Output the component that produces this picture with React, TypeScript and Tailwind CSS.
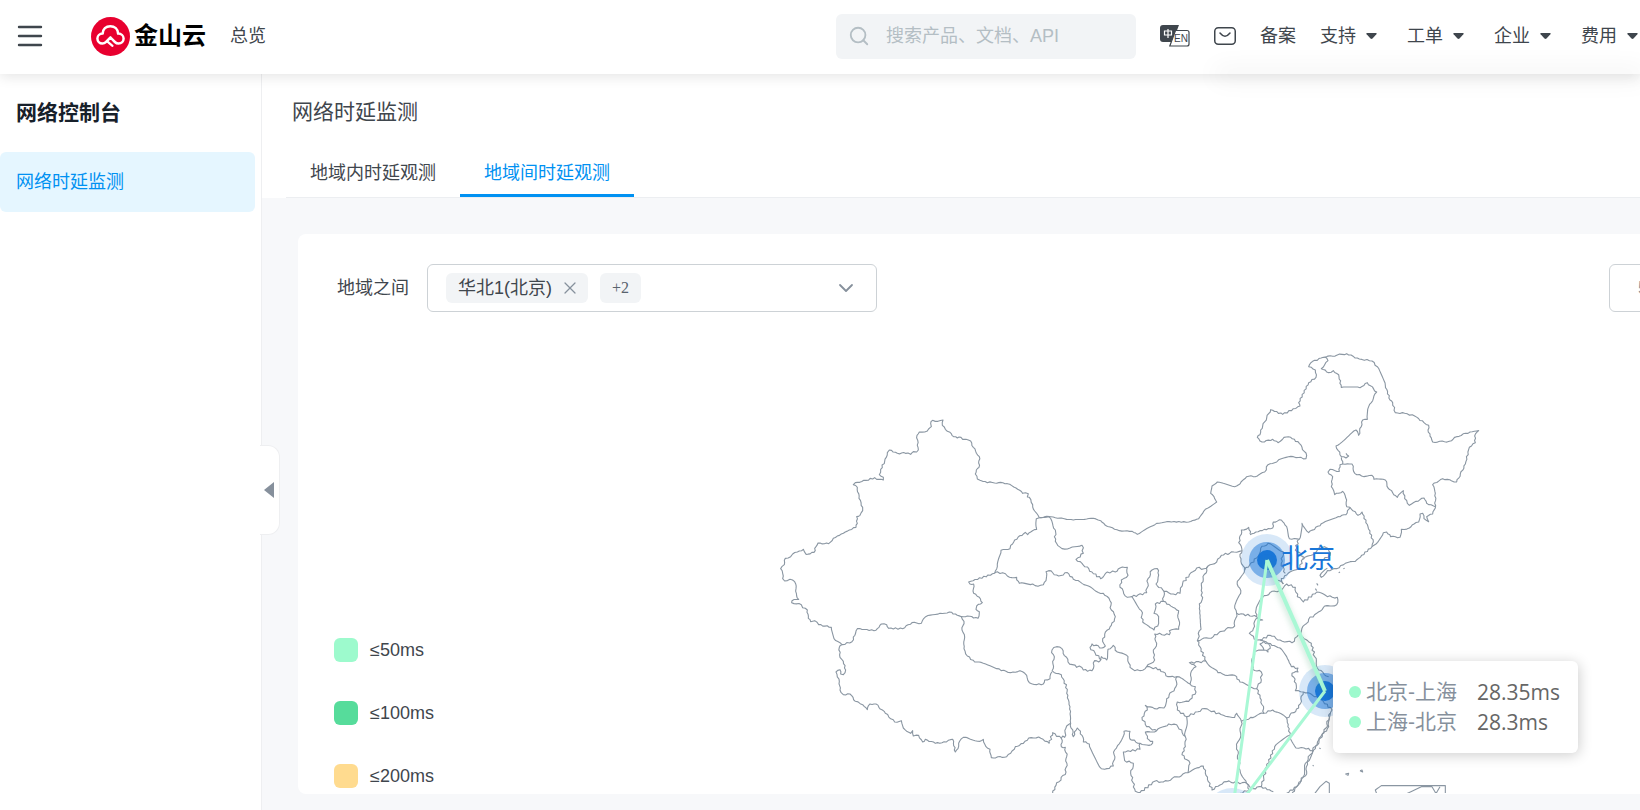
import { useState } from "react";
import type { ReactNode } from "react";
import { ChevronDown, Search, X } from "lucide-react";

const NAV_MENUS = ["支持", "工单", "企业", "费用"];

const TABS = [
  { id: "inner", label: "地域内时延观测" },
  { id: "between", label: "地域间时延观测" },
];

const LEGEND = [
  { label: "≤50ms", color: "bg-[#9dfacd]" },
  { label: "≤100ms", color: "bg-[#56dc9b]" },
  { label: "≤200ms", color: "bg-[#ffdb8f]" },
];

const DELAYS = [
  { route: "北京-上海", value: "28.35ms" },
  { route: "上海-北京", value: "28.3ms" },
];

const CITIES = [
  { name: "北京", x: 1267, y: 560, labelled: true },
  { name: "上海", x: 1325, y: 691, labelled: false },
  { name: "广州", x: 1232, y: 814, labelled: false },
];

// Province borders. Each sheet has its own origin and is drawn at three units per pixel.
const SHEETS = [
  {
    id: "west",
    origin: [760, 400],
    wobble: 2,
    lines: [
      "868,350 838,353 824,333 818,314 808,292 802,291 805,281 788,280 768,264 742,251 722,247 704,249 668,244 652,237 646,222 649,210 657,202 658,170 640,142 632,123 618,118 608,118 603,112 592,114 576,106 570,97 556,88 547,76 549,60 534,64 518,61 512,70 514,80 502,93 478,96 471,106 475,150 470,156 460,155 452,163 444,159 412,160 388,150 382,158 374,184 362,208 358,224 370,232 370,240 350,238 344,233 318,241 286,248 280,254 292,262 297,295 308,322 308,332 300,346 290,350 292,370 288,382 268,390 220,415 206,431 174,429 168,440 162,457 138,463 130,448 112,456 98,462 92,470 76,475 73,494 62,506 68,520 68,536 74,543 90,538 104,545 108,566 110,588 116,598 96,602 95,608 124,614 128,623 142,630 145,655 152,665 164,662 176,674 214,682 222,716 240,728 246,734",
      "246,734 276,725 292,686 342,692 352,686 364,672 380,674 386,685 428,686 456,668 484,670 497,650 540,640 568,636 604,650 622,648 654,655 658,635 648,628 650,618 667,608 658,592 641,580 641,552 630,552 626,546 704,520 712,500 723,451 750,446 752,436 764,420 796,397 803,404 812,396 830,388 829,356 838,353",
      "246,734 238,742 240,772 250,784 257,810 250,824 242,822 240,809 228,816 238,845 240,870 250,884 270,882 286,904 308,914 322,929 330,912 348,912 376,940 404,966 424,962 430,984 452,1000 458,992 460,1008 476,1006 488,1026 496,1018 526,1030 546,1028 578,1018 586,1056 594,1046 596,1030 610,1012 660,1024 670,1018 678,1040 690,1048 694,1073 740,1070 752,1060 766,1040 790,1030 806,1014 836,1011 868,1030",
      "604,650 612,664 606,690 614,712 612,746 622,768 644,786 670,790 710,806 752,818 780,812 800,826 808,848 830,854 850,852 854,840 870,836 876,815",
    ],
  },
  {
    id: "plateau",
    origin: [900, 560],
    wobble: 3,
    lines: [
      "448,550 458,518 484,535 488,528 494,532 500,498 512,490",
      "456,332 484,344 502,388 500,400 510,440 512,490 520,530 532,504 546,526 550,546 568,552 604,626 614,628 640,618 644,570 662,545 672,514 690,514 692,540",
      "484,535 484,560 496,562 500,590 498,636 468,676 458,700",
      "284,38 308,38 322,48 350,52 358,70 398,72 414,79 430,74 438,62 438,35 446,32 476,48 502,38 520,58 546,70 588,94 610,100 630,122 634,150 646,170 634,196 622,210 608,236 616,258 606,264 576,252 570,262 604,300",
      "456,332 462,298 456,270 470,260 486,266 504,306 530,322 538,318 550,330 576,332 584,302 596,306 604,290 620,300 624,268 640,256 652,276 684,290 690,322 704,332 720,332",
    ],
  },
  {
    id: "north-border",
    origin: [1040, 480],
    wobble: 1,
    lines: [
      "0,113 26,110 100,120 160,115 182,122 196,136 238,152 276,154 292,163 350,130 380,125 446,126 476,116 496,88 530,66 522,50 512,40 516,18 532,6 550,10 584,20 600,12",
    ],
  },
  {
    id: "centre",
    origin: [1040, 480],
    wobble: 3,
    lines: [
      "600,168 596,188 606,212 582,216 544,226 530,246 504,258 492,266 470,264 448,284 428,310 420,340 400,342 372,334 348,312 356,285 352,266 336,270 324,296 320,338 276,350 262,352 240,322 244,300 264,286 262,262 240,264 226,276 202,276 182,296 156,276 126,250 108,238 130,220 126,196 90,204 66,206 46,184 46,150 26,110",
      "276,350 304,392 308,426 342,450 356,430 356,410 342,400 346,372 370,364 416,392 416,448 388,452 388,464 344,462 350,490 340,510 344,540 320,560",
      "370,364 372,334",
      "300,572 320,560 360,568 384,590 410,590 450,612",
      "504,258 484,310 486,360 478,372 482,440 472,482 498,544 448,548 468,560 452,580 450,612",
      "472,482 520,470 540,455 584,438 590,400 584,384 602,340 592,304 614,270 600,230 606,212",
      "498,544 534,578 590,590 600,606 650,626 664,600 664,576 638,568 636,550 642,516 672,510 660,492 672,484 690,498 684,516 672,510",
      "684,490 650,480 628,460 640,446 648,416 668,420 650,410 590,400",
      "648,412 648,390 668,352 690,338 718,332 740,312 766,322 772,350 790,366 830,336 862,350 892,352 890,374 854,378 830,400 806,418 776,464 756,488 720,480 690,466 660,480",
      "776,464 814,490 824,530 836,570 866,590",
      "684,490 720,504 740,530 754,560 774,564 774,576 756,580 768,610 766,632 790,636 830,650 850,664 876,690 866,740 836,780 818,812 796,850 790,890 770,920 740,940",
      "870,700 858,744 842,770 826,806 802,846 800,882 776,914 756,938",
      "650,626 664,660 672,700 698,690 740,714 776,684 790,636",
      "672,700 632,712 604,724 590,700 584,712 550,706 494,686 440,710 412,690 412,666 446,664 468,636 466,620 450,612",
      "410,590 408,620 380,656 372,684 344,686 316,676 322,690 306,712 320,740 350,752 386,732 410,734 436,770 440,710",
      "270,778 300,790 300,808 250,816 254,842 280,850 272,880 286,934 300,938 344,904 370,906 444,878 450,850 426,824 436,800 436,770",
      "350,752 316,756 322,776 338,784 334,794 300,790",
      "444,878 464,866 490,858 498,886 516,930 540,915 560,905 620,910 600,870 590,800 602,760 604,724",
      "740,714 750,766 704,800 680,860 664,920 700,935",
      "664,920 640,926 620,910",
      "750,766 768,804 792,804 818,812",
      "776,178 766,210 790,230 780,262 740,285 724,296 730,312",
      "614,270 650,234 662,205 684,190 730,215 724,250 736,280",
      "684,260 700,290 730,312",
      "790,238 830,214 840,198 866,206 870,226 850,240",
      "600,168 604,150 626,142 630,162",
      "620,910 628,930 600,940",
    ],
  },
  {
    id: "northeast",
    origin: [1240, 340],
    wobble: 2,
    lines: [
      "0,432 20,410 52,408 74,396 84,374 110,366 124,356 160,350 198,356 200,346 178,310 152,292 132,292 114,308 98,298 66,306 52,292 60,284 62,270 92,209 128,223 180,198 176,188 206,128 228,112 226,90 206,80 218,64 250,52 320,41 358,57 396,63 412,80 436,136 450,180 458,188 466,218 494,220 524,228 552,248 566,256 564,270 578,306 628,304 650,290 690,276 716,272 704,288 706,308 688,322 676,372 650,426 608,416 578,434 586,460 586,504 578,522 560,530 566,545 552,536 548,520 540,522 536,546 522,552 508,564 484,568 480,592 452,590 440,576 430,578 408,612 396,620 346,664 316,670 290,686 262,692 244,712 240,706 262,685",
      "254,50 264,62 244,86 266,98 280,92 296,104 304,142 360,143 382,128 410,156 386,200 382,238 368,240 356,286 348,270 288,318 304,350 318,354 326,348 318,340",
      "304,352 308,372 300,374 298,394 270,388 264,396 278,410 274,440 284,464 308,454 320,480 320,500 330,502",
      "308,372 336,372 344,400 372,410 396,406 402,418 436,420 444,444 472,472 490,452 494,476 508,496 528,484 552,474 560,490 586,500",
      "330,502 354,526 366,516 384,560 400,606 396,620",
      "330,502 318,524 294,530 250,548 206,578 186,550 178,598 148,596 140,560 124,540 100,546 98,564 60,572 30,584",
    ],
  },
  {
    id: "islands",
    origin: [1220, 500],
    wobble: 0,
    lines: [
      "284,881 300,860 318,844 328,850 328,881",
      "470,881 466,870 484,857 676,857 676,881",
      "560,881 604,860 636,860 648,881 660,860",
      "376,822 386,820 384,826 376,822",
      "420,812 426,810 428,816 420,812",
      "290,250 294,256",
      "286,266 290,272",
      "356,218 360,216",
      "278,796 281,798",
      "298,744 302,746",
      "370,206 374,205",
    ],
  },
];

// Breaks every straight run into short, slightly displaced steps.
function roughen(line: string, amount: number) {
  const points = line.split(" ").map((pair) => pair.split(",").map(Number));
  const out = [`M${points[0][0]},${points[0][1]}`];
  for (let i = 1; i < points.length; i++) {
    const [x0, y0] = points[i - 1];
    const [x1, y1] = points[i];
    const length = Math.hypot(x1 - x0, y1 - y0);
    const steps = Math.max(1, Math.round(length / 7));
    for (let s = 1; s < steps; s++) {
      const t = s / steps;
      const x = x0 + (x1 - x0) * t;
      const y = y0 + (y1 - y0) * t;
      const shift = Math.sin(x * 12.9898 + y * 78.233) * amount;
      const px = x - ((y1 - y0) / length) * shift;
      const py = y + ((x1 - x0) / length) * shift;
      out.push(`L${px.toFixed(1)},${py.toFixed(1)}`);
    }
    out.push(`L${x1},${y1}`);
  }
  return out.join("");
}

function Logo() {
  return (
    <a href="#" className="flex items-center gap-1 text-black no-underline">
      <svg width="39" height="39" viewBox="0 0 39 39" aria-hidden="true">
        <circle cx="19.5" cy="19.5" r="19.5" fill="#e8002f" />
        <g fill="none" stroke="#fff" strokeWidth="2.5" strokeLinecap="round" strokeLinejoin="round">
          <path d="M19.5 20.500 14.800 25.200C13.800 26.200 12.600 26.600 11.400 26.600 8.600 26.600 6.400 24.300 6.400 21.600c0-2.800 2.200-5 5.300-5C11.700 12 15 9.200 19.300 9.200s7.600 2.800 7.800 7.400c3.200 0 5.500 2.200 5.500 5s-2.200 5-5 5c-1.600 0-2.700-.6-3.700-1.600l-4.400-4.500" />
          <path d="M16.800 24.800 21.500 28.800" strokeWidth="2.2" />
        </g>
      </svg>
      <span className="text-2xl font-bold">金山云</span>
    </a>
  );
}

function LanguageIcon() {
  return (
    <svg width="30" height="22" viewBox="0 0 30 22" aria-hidden="true">
      <path d="M3 0h16l-6.500 17H3a3 3 0 0 1-3-3V3a3 3 0 0 1 3-3z" fill="#3f464d" />
      <path d="M15.500 5.500H27a2 2 0 0 1 2 2v11.500a2 2 0 0 1-2 2H9.800z" fill="#fff" stroke="#3f464d" strokeWidth="1.2" />
      <path d="M4.500 6h7v4h-7zM8 4v9" fill="none" stroke="#fff" strokeWidth="1.2" />
      <text x="14" y="17" fontSize="10" fill="#3f464d" fontFamily="Liberation Sans, sans-serif">
        EN
      </text>
    </svg>
  );
}

function MailIcon() {
  return (
    <svg width="22" height="18" viewBox="0 0 22 18" fill="none" stroke="#3f464d" strokeWidth="1.5" aria-hidden="true">
      <rect x="0.75" y="0.75" width="20.5" height="16.5" rx="3.5" />
      <path d="M6 6c1.800 2.200 3.200 3.300 5 3.300S14.200 8.200 16 6" strokeLinecap="round" />
    </svg>
  );
}

function Header() {
  return (
    <header className="relative z-20 flex h-[74px] items-center bg-white pr-[2px] pb-[2px] pl-4 shadow-[0_3px_12px_rgba(0,0,0,0.1)]">
      <div className="absolute top-full right-0 h-0 w-[420px] shadow-[0_0_24px_6px_rgba(0,0,0,0.06)]" />
      <button type="button" aria-label="菜单" className="mr-12 text-[#3f464d]">
        <svg width="27" height="22" viewBox="0 0 27 22" stroke="currentColor" strokeWidth="2.4" strokeLinecap="round" aria-hidden="true">
          <path d="M3 2h22M3 11h22M3 20h22" />
        </svg>
      </button>
      <Logo />
      <a href="#" className="ml-6 shrink-0">总览</a>

      <div className="ml-auto flex shrink-0 items-center">
        <label className="mr-6 flex h-[45px] w-[300px] items-center gap-4 rounded-md bg-[#f2f4f6] px-3 text-[#b4bec4]">
          <Search size={22} strokeWidth={2} className="shrink-0" aria-hidden="true" />
          <input
            type="search"
            aria-label="搜索"
            placeholder="搜索产品、文档、API"
            className="w-full bg-transparent outline-none placeholder:text-[#b4bec4]"
          />
        </label>
        <button type="button" aria-label="中英文切换" className="mr-6">
          <LanguageIcon />
        </button>
        <button type="button" aria-label="消息" className="mr-6">
          <MailIcon />
        </button>
        <a href="#" className="mr-6">备案</a>
        <nav className="flex gap-[30px]">
          {NAV_MENUS.map((label) => (
            <button key={label} type="button" className="flex items-center gap-[10px]">
              {label}
              <svg width="11" height="6" viewBox="0 0 11 6" fill="currentColor" aria-hidden="true">
                <path d="M1 0h9q1.200.2.400 1.200L6.500 5.500q-1 .8-2 0L.6 1.200Q-.2.200 1 0z" />
              </svg>
            </button>
          ))}
        </nav>
      </div>
    </header>
  );
}

function Sidebar({ children }: { children?: ReactNode }) {
  return (
    <aside className="relative w-[262px] shrink-0 border-r border-[#eeeff1] bg-white">
      <h2 className="px-4 pt-[23px] text-[21px] leading-8 font-bold text-[#17202a]">网络控制台</h2>
      <a
        href="#"
        className="mt-[23px] mr-1.5 flex h-[60px] items-center rounded-md bg-[#e5f6ff] px-4 text-[#0091f2]"
      >
        网络时延监测
      </a>
      {children}
    </aside>
  );
}

function LatencyMap() {
  return (
    <svg
      width="880"
      height="453"
      viewBox="760 340 880 453"
      className="block"
      role="img"
      aria-label="地域间时延地图"
    >
      <g fill="none" stroke="#8a96a2" strokeWidth="3.3" strokeLinejoin="round">
        {SHEETS.map((sheet) => (
          <g key={sheet.id} transform={`translate(${sheet.origin[0]} ${sheet.origin[1]}) scale(0.33333)`}>
            {sheet.lines.map((line) => (
              <path key={line} d={roughen(line, sheet.wobble)} />
            ))}
          </g>
        ))}
      </g>

      {CITIES.map((city) => (
        <g key={city.name} fill="#1976d8">
          <circle cx={city.x} cy={city.y} r="26" opacity="0.17" />
          <circle cx={city.x} cy={city.y} r="18" opacity="0.5" />
          <circle cx={city.x} cy={city.y} r="10" />
          {city.labelled && (
            <text x={city.x + 14} y={city.y + 8} fontSize="27">
              {city.name}
            </text>
          )}
        </g>
      ))}

      <g fill="none" stroke="#a9f8d5" strokeLinejoin="bevel">
        <path
          d="M1267 560 1325 691"
          strokeWidth="4"
          className="[filter:drop-shadow(-1px_1px_3px_rgba(60,160,110,0.35))]"
        />
        <path d="M1325 691 1232 814 1267 560" strokeWidth="3" />
      </g>
    </svg>
  );
}

function DelayTooltip() {
  return (
    <div
      role="tooltip"
      className="absolute top-[321px] left-[573px] w-[245px] rounded-md bg-white px-4 py-4 text-[21px] leading-[30px] shadow-[1px_2px_14px_rgba(0,0,0,0.2)]"
    >
      {DELAYS.map((delay) => (
        <div key={delay.route} className="flex items-center">
          <span className="mr-[5px] size-3 rounded-full bg-[#9dfacd]" />
          <span className="mr-5 text-[#86909c]">{delay.route}</span>
          <span className="font-['Open_Sans','Noto_Sans_CJK_SC',sans-serif] font-medium text-[#666]">{delay.value}</span>
        </div>
      ))}
    </div>
  );
}

function RegionPicker() {
  return (
    <div className="flex items-center pt-[30px] pl-[39px]">
      <span id="region-label" className="mr-[18px] shrink-0">地域之间</span>
      <div
        role="group"
        aria-labelledby="region-label"
        className="flex h-12 w-[450px] items-center rounded-md border border-[#cdd2d6] px-[18px]"
      >
        <span className="mr-3 flex h-[30px] items-center gap-2 rounded-md bg-[#f2f4f6] pr-2 pl-3">
          华北1(北京)
          <button type="button" aria-label="移除 华北1(北京)" className="text-[#86909c]">
            <X size={20} strokeWidth={1.5} />
          </button>
        </span>
        <span className="flex h-[30px] items-center rounded-md bg-[#f2f4f6] px-3 font-['Liberation_Serif',serif] text-base text-[#59636d]">
          +2
        </span>
        <button type="button" aria-label="展开" className="ml-auto text-[#86909c]">
          <ChevronDown size={24} strokeWidth={1.8} />
        </button>
      </div>
      <button
        type="button"
        className="-mr-20 ml-auto h-12 w-[111px] shrink-0 rounded-md border border-[#cdd2d6] pl-7 text-left text-[#86909c]"
      >
        5分钟
      </button>
    </div>
  );
}

function App() {
  const [activeTab, setActiveTab] = useState("between");
  const [collapsed, setCollapsed] = useState(false);

  return (
    <div className="flex h-screen flex-col overflow-hidden bg-[#f7f8fa] font-['Liberation_Sans','Noto_Sans_CJK_SC',sans-serif] text-lg text-[#3f464d]">
      <Header />
      <div className="flex min-h-0 flex-1">
        <Sidebar>
          <button
            type="button"
            aria-label="收起侧栏"
            aria-expanded={!collapsed}
            onClick={() => setCollapsed(!collapsed)}
            className="absolute top-[371px] -right-[19px] z-10 flex h-[90px] w-5 items-center rounded-r-xl border border-l-0 border-[#eeeff1] bg-white pl-1"
          >
            <svg width="10" height="16" viewBox="0 0 10 16" fill="#86909c" aria-hidden="true">
              <path d="M10 0v16L0 8z" />
            </svg>
          </button>
        </Sidebar>

        <main className="flex min-w-0 flex-1 flex-col overflow-hidden">
          <div className="bg-white pl-6">
            <h1 className="pt-[22px] pl-1.5 text-[21px] leading-8">网络时延监测</h1>
            <div role="tablist" className="mt-[21px] flex border-b border-[#eceef1]">
              {TABS.map((tab) => (
                <button
                  key={tab.id}
                  type="button"
                  role="tab"
                  aria-selected={activeTab === tab.id}
                  onClick={() => setActiveTab(tab.id)}
                  className={
                    activeTab === tab.id
                      ? "h-12 border-b-[3px] border-[#0091f2] px-6 pt-0.5 text-[#0091f2]"
                      : "h-12 border-b-[3px] border-transparent px-6 pt-0.5"
                  }
                >
                  {tab.label}
                </button>
              ))}
            </div>
          </div>

          <section className="mt-9 mb-4 ml-9 flex min-h-0 flex-1 flex-col overflow-hidden rounded-l-lg bg-white">
            <RegionPicker />
            <div className="mt-7 flex min-h-0 flex-1">
              <ul className="mb-[6px] ml-9 flex w-[426px] shrink-0 flex-col justify-end gap-[39px]">
                {LEGEND.map((item) => (
                  <li key={item.label} className="flex h-6 items-center gap-3">
                    <span className={`size-6 rounded-md ${item.color}`} />
                    {item.label}
                  </li>
                ))}
              </ul>
              <div className="relative shrink-0">
                <LatencyMap />
                <DelayTooltip />
              </div>
            </div>
          </section>
        </main>
      </div>
    </div>
  );
}

export default App;
